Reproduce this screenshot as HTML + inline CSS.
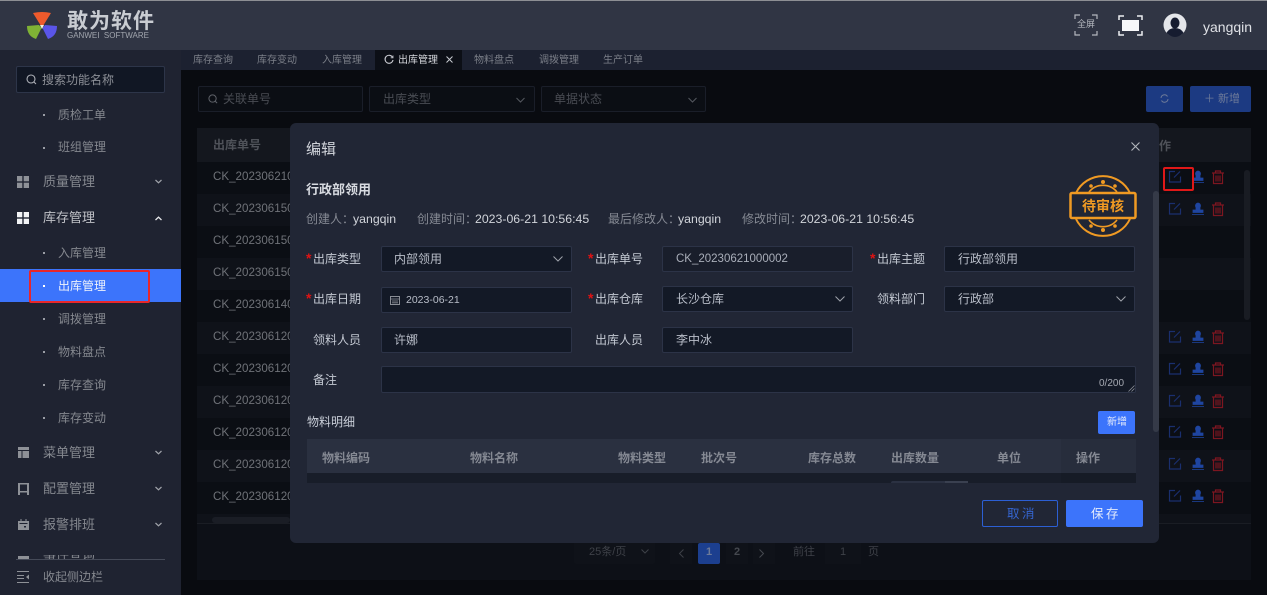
<!DOCTYPE html>
<html lang="zh"><head><meta charset="utf-8"><title>出库管理</title>
<style>
html,body{margin:0;padding:0;width:1267px;height:595px;overflow:hidden;background:#090b10}
body{font-family:"Liberation Sans","Noto Sans CJK SC",sans-serif;position:relative;font-size:12px}
.a,.t{position:absolute}
.t{white-space:nowrap;line-height:16px}
svg{position:absolute;overflow:visible}
.inp{position:absolute;box-sizing:border-box;height:26px;background:#131926;border:1px solid #2c3347;border-radius:2px}
.lab{position:absolute;color:#c4c9d3;font-size:12px;line-height:16px;white-space:nowrap}
.val{position:absolute;color:#b9bec9;font-size:12px;line-height:16px;white-space:nowrap}
.star{color:#e01313;position:absolute;font-size:14px;font-weight:bold;line-height:16px}
.sb{color:#85888f;font-size:12px;position:absolute;line-height:16px;white-space:nowrap}
.sb1{color:#85888f;font-size:13px;position:absolute;line-height:18px;white-space:nowrap;left:43px}
.dot{position:absolute;left:43px;width:2px;height:2px;background:#9a9da5}
.tab{position:absolute;top:54px;font-size:10px;line-height:14px;color:#7b7f88;white-space:nowrap}
.ck{position:absolute;left:213px;color:#6f7278;font-size:11.600px;line-height:16px;white-space:nowrap}
.th{position:absolute;top:450px;color:#858993;font-size:12px;font-weight:bold;line-height:16px;white-space:nowrap}
</style></head><body>

<!-- top bar -->
<div class="a" style="left:0;top:0;width:1267px;height:50px;background:#303544"></div>
<div class="a" style="left:0;top:0;width:1267px;height:1px;background:#8d8f94"></div>
<svg style="left:27px;top:12px" width="30" height="28" viewBox="0 0 30 28">
<path d="M6 1 Q15-1 24 1 L16 14 L14 14Z" fill="#ee5a2c"/>
<path d="M0 14 L12 13 L14.500 16 L9 27 Q0 24 0 14Z" fill="#7fb235"/>
<path d="M30 14 L18 13 L15.500 16 L21 27 Q30 24 30 14Z" fill="#5a55e8"/>
<path d="M13 13 L17 13 L15 17Z" fill="#f4f0e0"/></svg>
<div class="t" style="left:67px;top:10px;font-size:21px;line-height:24px;font-weight:bold;color:#c9ccd2;letter-spacing:1px">敢为软件</div>
<div class="t" style="left:67px;top:31px;font-size:8px;line-height:10px;color:#a2a6ae">GANWEI&nbsp; SOFTWARE</div>

<svg style="left:1075px;top:14px" width="22" height="22" viewBox="0 0 22 22" fill="none" stroke="#b4b7be" stroke-width="1.200"><path d="M0 5V1H5M17 1H22V5M22 17V21H17M5 21H0V17"/></svg>
<div class="t" style="left:1077px;top:17px;font-size:9px;line-height:14px;color:#b4b7be">全屏</div>
<svg style="left:1119px;top:15px" width="23" height="21" viewBox="0 0 23 21" fill="none" stroke="#eceef2" stroke-width="1.500"><path d="M0 5V1H5M18 1H23V5M23 16V20H18M5 20H0V16"/><rect x="3" y="5" width="17" height="11" fill="#f6f7f9" stroke="none"/></svg>
<svg style="left:1163px;top:13px" width="24" height="24" viewBox="0 0 24 24"><circle cx="12" cy="12" r="11.500" fill="#e4e6ea"/><ellipse cx="12" cy="10" rx="4.500" ry="5.500" fill="#161c30"/><path d="M3.500 20 Q6 15 12 15 Q18 15 20.500 20 Q16 24 12 24 Q8 24 3.500 20Z" fill="#161c30"/></svg>
<div class="t" style="left:1203px;top:19px;font-size:14px;color:#dfe1e6">yangqin</div>

<!-- sidebar -->
<div class="a" style="left:0;top:50px;width:181px;height:545px;background:#1f2331"></div>
<div class="a" style="left:16px;top:66px;width:149px;height:27px;box-sizing:border-box;background:#111724;border:1px solid #2d3549;border-radius:2px"></div>
<svg style="left:26px;top:74px" width="11" height="11" viewBox="0 0 11 11" fill="none" stroke="#aeb1b8" stroke-width="1.100"><circle cx="5" cy="5" r="4"/><path d="M8 8L10 10"/></svg>
<div class="sb" style="left:42px;top:72px;color:#8d9097">搜索功能名称</div>

<div class="dot" style="top:114px"></div><div class="sb" style="left:58px;top:107px">质检工单</div>
<div class="dot" style="top:147px"></div><div class="sb" style="left:58px;top:139px">班组管理</div>
<svg style="left:17px;top:176px" width="12" height="12" viewBox="0 0 12 12" fill="#8e9197"><rect width="5.300" height="5.300"/><rect x="6.700" width="5.300" height="5.300"/><rect y="6.700" width="5.300" height="5.300"/><rect x="6.700" y="6.700" width="5.300" height="5.300"/></svg>
<div class="sb1" style="top:173px">质量管理</div>
<svg style="left:155px;top:179px" width="7" height="5" viewBox="0 0 7 5" fill="none" stroke="#a0a3aa" stroke-width="1.200"><path d="M.5 1L3.500 3.800L6.500 1"/></svg>
<svg style="left:17px;top:212px" width="12" height="12" viewBox="0 0 12 12" fill="#f2f3f5"><rect width="5.300" height="5.300"/><rect x="6.700" width="5.300" height="5.300"/><rect y="6.700" width="5.300" height="5.300"/><rect x="6.700" y="6.700" width="5.300" height="5.300"/></svg>
<div class="sb1" style="top:209px;color:#c0c2c7">库存管理</div>
<svg style="left:155px;top:216px" width="7" height="5" viewBox="0 0 7 5" fill="none" stroke="#e6e7ea" stroke-width="1.300"><path d="M.5 4L3.500 1.200L6.500 4"/></svg>
<div class="dot" style="top:252px"></div><div class="sb" style="left:58px;top:245px">入库管理</div>
<div class="a" style="left:0;top:269px;width:181px;height:33px;background:#3c74fb"></div>
<div class="a" style="left:29px;top:270px;width:121px;height:33px;box-sizing:border-box;border:2px solid #e8262a;border-radius:2px"></div>
<div class="dot" style="top:285px;background:#fff"></div><div class="sb" style="left:58px;top:278px;color:#eef2fb">出库管理</div>
<div class="dot" style="top:318px"></div><div class="sb" style="left:58px;top:311px">调拨管理</div>
<div class="dot" style="top:351px"></div><div class="sb" style="left:58px;top:344px">物料盘点</div>
<div class="dot" style="top:384px"></div><div class="sb" style="left:58px;top:377px">库存查询</div>
<div class="dot" style="top:417px"></div><div class="sb" style="left:58px;top:410px">库存变动</div>
<svg style="left:18px;top:447px" width="11" height="11" viewBox="0 0 11 11" fill="#8e9197"><path d="M0 0H11V3H0ZM0 4H3.500V11H0ZM4.500 4H11V11H4.500Z"/></svg>
<div class="sb1" style="top:444px">菜单管理</div>
<svg style="left:155px;top:450px" width="7" height="5" viewBox="0 0 7 5" fill="none" stroke="#a0a3aa" stroke-width="1.200"><path d="M.5 1L3.500 3.800L6.500 1"/></svg>
<svg style="left:18px;top:483px" width="11" height="12" viewBox="0 0 11 12" fill="#8e9197"><path d="M0 0H11V12H9V9.500H2V12H0ZM2 1.500V8H9V1.500Z"/></svg>
<div class="sb1" style="top:480px">配置管理</div>
<svg style="left:155px;top:486px" width="7" height="5" viewBox="0 0 7 5" fill="none" stroke="#a0a3aa" stroke-width="1.200"><path d="M.5 1L3.500 3.800L6.500 1"/></svg>
<svg style="left:18px;top:519px" width="11" height="11" viewBox="0 0 11 11" fill="#8e9197"><path d="M0 2H2.500V0H3.500V2H7.500V0H8.500V2H11V11H0ZM1.500 4V5H9.500V4ZM6 7V8.500H8V7Z"/></svg>
<div class="sb1" style="top:516px">报警排班</div>
<svg style="left:155px;top:522px" width="7" height="5" viewBox="0 0 7 5" fill="none" stroke="#a0a3aa" stroke-width="1.200"><path d="M.5 1L3.500 3.800L6.500 1"/></svg>
<div class="a" style="left:0;top:555px;width:181px;height:4px;overflow:hidden"><div class="sb1" style="top:-9px">事件查询</div><div class="a" style="left:18px;top:1px;width:11px;height:3px;background:#8e9197"></div></div>
<div class="a" style="left:0;top:559px;width:181px;height:36px;background:#1f2331"></div>
<div class="a" style="left:16px;top:559px;width:149px;height:1px;background:#454a58"></div>
<svg style="left:17px;top:571px" width="12" height="12" viewBox="0 0 12 12" fill="none" stroke="#8e9197" stroke-width="1"><path d="M0 .5H12M0 11.500H12M0 4.500H7M0 7.500H7"/><path d="M12 3.500V8.500L9 6Z" fill="#8e9197" stroke="none"/></svg>
<div class="sb1" style="top:568px;font-size:12px;line-height:18px">收起侧边栏</div>

<!-- tabs -->
<div class="a" style="left:181px;top:50px;width:1086px;height:20px;background:#1c2130"></div>
<div class="tab" style="left:193px">库存查询</div>
<div class="tab" style="left:257px">库存变动</div>
<div class="tab" style="left:322px">入库管理</div>
<div class="a" style="left:375px;top:50px;width:87px;height:20px;background:#0c0f16"></div>
<svg style="left:384px;top:55px" width="10" height="10" viewBox="0 0 10 10" fill="none" stroke="#c8cad0" stroke-width="1.100"><path d="M8.500 2.200A4 4 0 1 0 9 5"/><path d="M9 .5V2.800H6.700" stroke-width=".8"/></svg>
<div class="tab" style="left:398px;color:#d5d7dc">出库管理</div>
<svg style="left:446px;top:56px" width="7" height="7" viewBox="0 0 7 7" stroke="#c8cad0" stroke-width="1"><path d="M.5.5L6.500 6.500M6.500.5L.5 6.500"/></svg>
<div class="tab" style="left:474px">物料盘点</div>
<div class="tab" style="left:539px">调拨管理</div>
<div class="tab" style="left:603px">生产订单</div>

<!-- dim page -->
<div class="a" style="left:197px;top:128px;width:1054px;height:34px;background:#14171e"></div>
<div class="t" style="left:213px;top:137px;color:#4f5259;font-size:12px;font-weight:bold">出库单号</div>
<div class="a" style="left:197px;top:162px;width:1054px;height:361px;background:#0b0e14"></div>
<div class="a" style="left:197px;top:194px;width:1054px;height:32px;background:#0f1219"></div>
<div class="a" style="left:197px;top:258px;width:1054px;height:32px;background:#0f1219"></div>
<div class="a" style="left:197px;top:322px;width:1054px;height:32px;background:#0f1219"></div>
<div class="a" style="left:197px;top:386px;width:1054px;height:32px;background:#0f1219"></div>
<div class="a" style="left:197px;top:450px;width:1054px;height:32px;background:#0f1219"></div>
<div class="a" style="left:197px;top:514px;width:1054px;height:9px;background:#0f1219"></div>
<div class="a" style="left:197px;top:523px;width:1054px;height:57px;background:#0d1017"></div>
<div class="a" style="left:197px;top:523px;width:1054px;height:1px;background:#1a1d24"></div>
<div class="a" style="left:212px;top:517px;width:78px;height:6px;background:#1a1d25;border-radius:3px"></div>
<div class="a" style="left:1244px;top:170px;width:6px;height:150px;background:#191c23;border-radius:3px"></div>
<div class="a" style="left:198px;top:86px;width:165px;height:26px;box-sizing:border-box;border:1px solid #1a1e29;border-radius:2px;background:#0b0e14"></div>
<svg style="left:208px;top:94px" width="10" height="10" viewBox="0 0 11 11" fill="none" stroke="#5e6168" stroke-width="1.100"><circle cx="5" cy="5" r="4"/><path d="M8 8L10 10"/></svg>
<div class="t" style="left:223px;top:91px;color:#494c53">关联单号</div>
<div class="a" style="left:369px;top:86px;width:166px;height:26px;box-sizing:border-box;border:1px solid #1a1e29;border-radius:2px;background:#0b0e14"></div>
<div class="t" style="left:383px;top:91px;color:#494c53">出库类型</div>
<svg style="left:516px;top:97px" width="9" height="6" viewBox="0 0 9 6" fill="none" stroke="#55585f"><path d="M.5 1L4.500 5L8.500 1"/></svg>
<div class="a" style="left:541px;top:86px;width:165px;height:26px;box-sizing:border-box;border:1px solid #1a1e29;border-radius:2px;background:#0b0e14"></div>
<div class="t" style="left:554px;top:91px;color:#494c53">单据状态</div>
<svg style="left:688px;top:97px" width="9" height="6" viewBox="0 0 9 6" fill="none" stroke="#55585f"><path d="M.5 1L4.500 5L8.500 1"/></svg>
<div class="a" style="left:1146px;top:86px;width:37px;height:26px;background:#1c3a82;border-radius:2px"></div>
<svg style="left:1160px;top:94px" width="9" height="9" viewBox="0 0 9 9" fill="none" stroke="#6d7a99" stroke-width="1"><path d="M1 4A3.500 3.500 0 0 1 7.500 2.500M8 5A3.500 3.500 0 0 1 1.500 6.500"/></svg>
<div class="a" style="left:1190px;top:86px;width:61px;height:26px;background:#1c3a82;border-radius:2px"></div>
<div class="t" style="left:1204px;top:91px;color:#6d7a99;font-size:11px">＋ 新增</div>
<div class="t" style="left:1159px;top:138px;color:#4f5259;font-weight:bold">作</div>

<div class="ck" style="top:169px">CK_202306210</div>
<div class="ck" style="top:201px">CK_202306150</div>
<div class="ck" style="top:233px">CK_202306150</div>
<div class="ck" style="top:265px">CK_202306150</div>
<div class="ck" style="top:297px">CK_202306140</div>
<div class="ck" style="top:329px">CK_202306120</div>
<div class="ck" style="top:361px">CK_202306120</div>
<div class="ck" style="top:393px">CK_202306120</div>
<div class="ck" style="top:425px">CK_202306120</div>
<div class="ck" style="top:457px">CK_202306120</div>
<div class="ck" style="top:489px">CK_202306120</div>

<svg style="left:0;top:0" width="1267" height="595">
<defs>
<g id="acts" fill="none">
<path d="M7 1.500H1.500V12H12.500V6.500M12 1.500L6 7.500" stroke="#1a2f6e" stroke-width="1.200"/>
<path d="M24 12.500H36M25 10.500H35V8H32V5.500A2.500 2.800 0 1 0 28 5.500V8H25Z" fill="#1f45a0" stroke="#1f45a0" stroke-width=".8"/>
<path d="M44 3H56M47.500 3V1H52.500V3M45.500 3.500V13.500H54.500V3.500M48 5.500V11.500M50 5.500V11.500M52 5.500V11.500" stroke="#7d1620" stroke-width="1.200"/>
</g></defs>
<use href="#acts" x="1168" y="170"/>
<use href="#acts" x="1168" y="202"/>
<use href="#acts" x="1168" y="330"/>
<use href="#acts" x="1168" y="362"/>
<use href="#acts" x="1168" y="394"/>
<use href="#acts" x="1168" y="425"/>
<use href="#acts" x="1168" y="457"/>
<use href="#acts" x="1168" y="489"/>
</svg>
<div class="a" style="left:1163px;top:167px;width:31px;height:24px;box-sizing:border-box;border:2px solid #e01818;border-radius:2px"></div>

<!-- pagination -->
<div class="a" style="left:574px;top:538px;width:81px;height:26px;background:#0f1219;border-radius:2px"></div>
<div class="t" style="left:589px;top:544px;color:#3e4148;font-size:11px">25条/页</div>
<svg style="left:641px;top:549px" width="8" height="5" viewBox="0 0 8 5" fill="none" stroke="#3e4148"><path d="M.5.5L4 4L7.500.5"/></svg>
<div class="a" style="left:670px;top:543px;width:22px;height:21px;background:#0f1219"></div>
<svg style="left:679px;top:549px" width="5" height="9" viewBox="0 0 5 9" fill="none" stroke="#3e4148"><path d="M4.500.5L.5 4.500L4.500 8.500"/></svg>
<div class="a" style="left:698px;top:543px;width:22px;height:21px;background:#1c3f8f;border-radius:2px"></div>
<div class="t" style="left:706px;top:544px;color:#6d7a99;font-size:11px;font-weight:bold">1</div>
<div class="a" style="left:726px;top:543px;width:22px;height:21px;background:#0f1219"></div>
<div class="t" style="left:734px;top:544px;color:#45484f;font-size:11px;font-weight:bold">2</div>
<div class="a" style="left:753px;top:543px;width:22px;height:21px;background:#0f1219"></div>
<svg style="left:759px;top:549px" width="5" height="9" viewBox="0 0 5 9" fill="none" stroke="#45484f"><path d="M.5.500L4.500 4.500L.5 8.500"/></svg>
<div class="t" style="left:793px;top:544px;color:#3e4148;font-size:11px">前往</div>
<div class="a" style="left:825px;top:543px;width:36px;height:21px;background:#0f1219"></div>
<div class="t" style="left:840px;top:544px;color:#3e4148;font-size:11px">1</div>
<div class="t" style="left:868px;top:544px;color:#3e4148;font-size:11px">页</div>

<!-- modal -->
<div class="a" style="left:290px;top:123px;width:869px;height:420px;background:#212635;border-radius:6px"></div>
<div class="t" style="left:306px;top:141px;font-size:15px;line-height:18px;color:#d0d3da">编辑</div>
<svg style="left:1131px;top:142px" width="9" height="9" viewBox="0 0 9 9" stroke="#b3b6bc" stroke-width="1.100"><path d="M.5.5L8.500 8.500M8.500.5L.5 8.500"/></svg>
<div class="t" style="left:306px;top:182px;font-size:13px;font-weight:bold;color:#d8dbe1">行政部领用</div>
<div class="t" style="left:306px;top:211px;color:#858993">创建人：</div><div class="t" style="left:353px;top:211px;color:#d2d5db;font-size:12.300px">yangqin</div>
<div class="t" style="left:417px;top:211px;color:#858993">创建时间：</div><div class="t" style="left:475px;top:211px;color:#d2d5db;font-size:12.300px">2023-06-21 10:56:45</div>
<div class="t" style="left:608px;top:211px;color:#858993">最后修改人：</div><div class="t" style="left:678px;top:211px;color:#d2d5db;font-size:12.300px">yangqin</div>
<div class="t" style="left:742px;top:211px;color:#858993">修改时间：</div><div class="t" style="left:800px;top:211px;color:#d2d5db;font-size:12.300px">2023-06-21 10:56:45</div>

<svg style="left:1069px;top:175px" width="68" height="62" viewBox="0 0 68 62" fill="none" stroke="#f09a23">
<path d="M7 18A30 30 0 0 1 61 18" stroke-width="2"/><path d="M7 44A30 30 0 0 0 61 44" stroke-width="2"/>
<path d="M20 17A18 18 0 0 1 48 17M20 45A18 18 0 0 0 48 45" stroke-width="1.600"/>
<rect x="1.500" y="18" width="65" height="25" rx="1.500" stroke-width="2.500" fill="#212635"/>
<g fill="#f09a23" stroke="none"><circle cx="34" cy="7" r="2"/><circle cx="22" cy="11" r="1.800"/><circle cx="46" cy="11" r="1.800"/><circle cx="34" cy="55" r="2"/><circle cx="22" cy="51" r="1.800"/><circle cx="46" cy="51" r="1.800"/></g>
<text x="34" y="36" text-anchor="middle" fill="#f09a23" stroke="none" font-size="14" font-weight="bold" font-family="'Liberation Sans','Noto Sans CJK SC',sans-serif">待审核</text></svg>

<div class="star" style="left:306px;top:250px">*</div><div class="lab" style="left:313px;top:251px">出库类型</div>
<div class="inp" style="left:381px;top:246px;width:191px"></div><div class="val" style="left:394px;top:251px">内部领用</div>
<svg style="left:553px;top:256px" width="10" height="6" viewBox="0 0 10 6" fill="none" stroke="#9ea2aa"><path d="M.5.500L5 5L9.500.5"/></svg>
<div class="star" style="left:588px;top:250px">*</div><div class="lab" style="left:595px;top:251px">出库单号</div>
<div class="inp" style="left:662px;top:246px;width:191px;background:#191e2b"></div><div class="val" style="left:676px;top:251px;color:#a9aeb9;font-size:11.500px">CK_20230621000002</div>
<div class="star" style="left:870px;top:250px">*</div><div class="lab" style="left:877px;top:251px">出库主题</div>
<div class="inp" style="left:944px;top:246px;width:191px"></div><div class="val" style="left:958px;top:251px">行政部领用</div>

<div class="star" style="left:306px;top:290px">*</div><div class="lab" style="left:313px;top:291px">出库日期</div>
<div class="inp" style="left:381px;top:287px;width:191px"></div>
<svg style="left:390px;top:295px" width="10" height="10" viewBox="0 0 10 10" fill="none" stroke="#8a8e96"><rect x=".5" y="1.500" width="9" height="8"/><path d="M.5 4H9.500M2 6H8M2 7.800H8" stroke-width=".8"/></svg>
<div class="val" style="left:406px;top:292px;font-size:10.500px">2023-06-21</div>
<div class="star" style="left:588px;top:290px">*</div><div class="lab" style="left:595px;top:291px">出库仓库</div>
<div class="inp" style="left:662px;top:286px;width:191px"></div><div class="val" style="left:676px;top:291px">长沙仓库</div>
<svg style="left:835px;top:296px" width="10" height="6" viewBox="0 0 10 6" fill="none" stroke="#9ea2aa"><path d="M.5.500L5 5L9.500.5"/></svg>
<div class="lab" style="left:877px;top:291px">领料部门</div>
<div class="inp" style="left:944px;top:286px;width:191px"></div><div class="val" style="left:958px;top:291px">行政部</div>
<svg style="left:1116px;top:296px" width="10" height="6" viewBox="0 0 10 6" fill="none" stroke="#9ea2aa"><path d="M.5.500L5 5L9.500.5"/></svg>

<div class="lab" style="left:313px;top:332px">领料人员</div>
<div class="inp" style="left:381px;top:327px;width:191px"></div><div class="val" style="left:394px;top:332px">许娜</div>
<div class="lab" style="left:595px;top:332px">出库人员</div>
<div class="inp" style="left:662px;top:327px;width:191px"></div><div class="val" style="left:676px;top:332px">李中冰</div>

<div class="lab" style="left:313px;top:372px">备注</div>
<div class="inp" style="left:381px;top:366px;width:755px;height:27px"></div>
<div class="t" style="left:1099px;top:377px;font-size:10px;line-height:13px;color:#a4a8b1">0/200</div>
<svg style="left:1128px;top:385px" width="7" height="7" viewBox="0 0 7 7" stroke="#8a8e96" stroke-width=".8"><path d="M6.500.5L.5 6.500M6.500 3.500L3.500 6.500"/></svg>

<div class="t" style="left:307px;top:414px;color:#c9ced8">物料明细</div>
<div class="a" style="left:1098px;top:411px;width:37px;height:23px;background:#3c74fb;border-radius:2px"></div>
<div class="t" style="left:1107px;top:415px;color:#e9eefb;font-size:10px;line-height:15px">新增</div>

<div class="a" style="left:307px;top:439px;width:829px;height:34px;background:#2a3040"></div>
<div class="a" style="left:307px;top:473px;width:829px;height:10px;background:#181d29"></div>
<div class="a" style="left:1061px;top:439px;width:75px;height:44px;background:#000;opacity:.06"></div>
<div class="th" style="left:322px">物料编码</div>
<div class="th" style="left:470px">物料名称</div>
<div class="th" style="left:618px">物料类型</div>
<div class="th" style="left:701px">批次号</div>
<div class="th" style="left:808px">库存总数</div>
<div class="th" style="left:891px">出库数量</div>
<div class="th" style="left:997px">单位</div>
<div class="th" style="left:1076px">操作</div>
<div class="a" style="left:891px;top:481px;width:77px;height:2px;background:#2b3142;border-radius:2px 2px 0 0"></div>
<div class="a" style="left:945px;top:481px;width:23px;height:2px;background:#3a4050"></div>

<div class="a" style="left:1153px;top:191px;width:6px;height:241px;background:#353a48;border-radius:3px"></div>

<div class="a" style="left:982px;top:500px;width:76px;height:27px;box-sizing:border-box;border:1px solid #2c5fd4;border-radius:2px"></div>
<div class="t" style="left:1007px;top:506px;color:#3565d0;font-size:12.500px;letter-spacing:2.500px">取消</div>
<div class="a" style="left:1066px;top:500px;width:77px;height:27px;background:#3c74fb;border-radius:2px"></div>
<div class="t" style="left:1091px;top:506px;color:#e4ebfb;font-size:12.500px;letter-spacing:2.500px">保存</div>

</body></html>
